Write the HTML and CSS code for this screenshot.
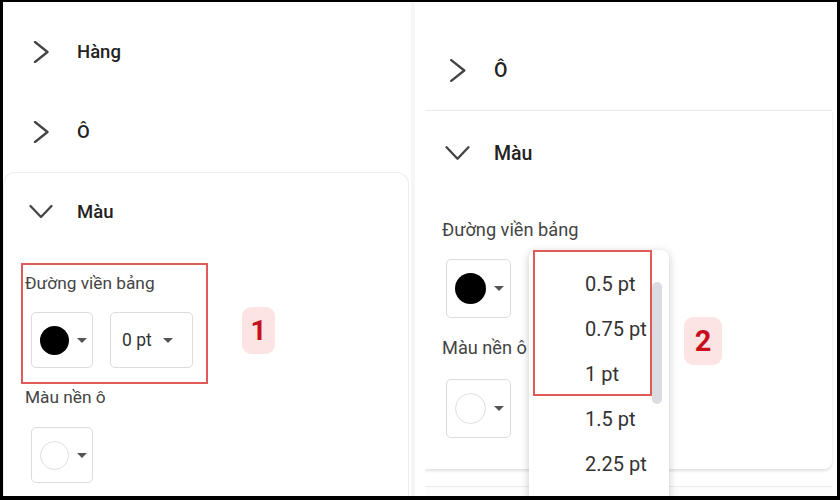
FILE: index.html
```
<!DOCTYPE html>
<html>
<head>
<meta charset="utf-8">
<link rel="stylesheet" href="styles.css">
</head>
<body>
<div class="frame">
  <div class="left">
    <div class="row">
      <span class="ico"><svg width="24" height="22" viewBox="0 0 24 22"><polyline points="6,1 18.5,11 6,21" /></svg></span>
      <span class="title">Hàng</span>
    </div>
    <div class="row">
      <span class="ico"><svg width="24" height="22" viewBox="0 0 24 22"><polyline points="6,1 18.5,11 6,21" /></svg></span>
      <span class="title">Ô</span>
    </div>
    <div class="card">
      <div class="row row-open">
        <span class="ico"><svg width="24" height="22" viewBox="0 0 24 22"><polyline points="1.5,5 12,16 22.5,5" /></svg></span>
        <span class="title">Màu</span>
      </div>
      <div class="label l1">Đường viền bảng</div>
      <div class="btns">
        <div class="cbtn"><span class="dot black"></span><span class="caret"></span></div>
        <div class="sbtn"><span class="stxt">0 pt</span><span class="caret"></span></div>
      </div>
      <div class="label l2">Màu nền ô</div>
      <div class="btns b2">
        <div class="cbtn"><span class="dot white"></span><span class="caret"></span></div>
      </div>
    </div>
    <div class="mark mark1"></div>
    <div class="badge badge1">1</div>
  </div>
  <div class="sep"></div>
  <div class="gap"></div>
  <div class="right">
    <div class="row">
      <span class="ico"><svg width="25" height="23" viewBox="0 0 24 22"><polyline points="6,1 18.5,11 6,21" /></svg></span>
      <span class="title">Ô</span>
    </div>
    <div class="card">
      <div class="row row-open">
        <span class="ico"><svg width="25" height="23" viewBox="0 0 24 22"><polyline points="1.5,5 12,16 22.5,5" /></svg></span>
        <span class="title">Màu</span>
      </div>
      <div class="label l1">Đường viền bảng</div>
      <div class="btns">
        <div class="cbtn"><span class="dot black"></span><span class="caret"></span></div>
      </div>
      <div class="label l2">Màu nền ô</div>
      <div class="btns b2">
        <div class="cbtn"><span class="dot white"></span><span class="caret"></span></div>
      </div>
    </div>
    <div class="below"><div class="next"></div></div>
    <div class="menu">
      <div class="item">0.5 pt</div>
      <div class="item">0.75 pt</div>
      <div class="item">1 pt</div>
      <div class="item">1.5 pt</div>
      <div class="item">2.25 pt</div>
      <div class="thumb"></div>
    </div>
    <div class="mark mark2"></div>
    <div class="badge badge2">2</div>
  </div>
</div>
</body>
</html>
```

FILE: styles.css
```
* { box-sizing: border-box; }
html, body { margin: 0; padding: 0; background: #000; }
body { font-family: Roboto, "Noto Sans", sans-serif; }

.frame {
  width: 840px;
  height: 500px;
  background: #000;
  padding: 2px 3px 4px 3px;
  display: flex;
}

.left {
  position: relative;
  width: 408px;
  background: #fff;
  padding-top: 10px;
  overflow: hidden;
}
.sep { width: 4px; background: #f6f6fa; }
.gap { width: 10px; background: #fff; }
.right {
  position: relative;
  flex: 1;
  background: #fff;
  padding-top: 28px;
  overflow: hidden;
  display: flex;
  flex-direction: column;
}
.right > .row, .right > .card { flex-shrink: 0; }

.row {
  height: 80px;
  display: flex;
  align-items: center;
  padding-left: 26px;
}
.ico { display: flex; margin-right: 24px; }
.ico svg polyline {
  fill: none;
  stroke: #454545;
  stroke-width: 2.3;
  stroke-linecap: round;
  stroke-linejoin: round;
}
.title {
  font-size: 18.5px;
  font-weight: 500;
  color: #222;
}

.left .card {
  border: 1px solid #ededed;
  border-bottom: none;
  border-radius: 12px 12px 0 0;
  margin-right: 2px;
  padding-left: 21px;
}
.left .card .row { height: 78px; padding-left: 25px; margin-left: -21px; }

.label {
  font-size: 17.3px;
  line-height: 20px;
  color: #444;
}
.left .l1 { margin-top: 22px; }
.left .l2 { margin-top: 19px; }
.btns {
  display: flex;
  gap: 17px;
  margin-top: 19px;
  margin-left: 6px;
}
.left .b2 { margin-top: 20px; padding-bottom: 20px; }

.cbtn, .sbtn {
  height: 56px;
  border: 1px solid #dcdcdc;
  border-radius: 5px;
  display: flex;
  align-items: center;
  background: #fff;
}
.cbtn { width: 62px; padding-left: 8px; }
.sbtn { width: 83px; padding-left: 11px; }
.stxt { font-size: 17.5px; color: #333; margin-right: 11px; }
.dot {
  width: 29px;
  height: 29px;
  border-radius: 50%;
  margin-right: 8px;
}
.dot.black { background: #000; }
.dot.white { background: #fff; border: 1px solid #dedede; }
.caret {
  width: 0;
  height: 0;
  border-left: 5px solid transparent;
  border-right: 5px solid transparent;
  border-top: 5px solid #555;
}

/* right panel, slightly larger scale */
.right .row { padding-left: 20px; }
.right .title { font-size: 19.5px; }
.right .card {
  border-top: 1px solid #e9e9e9;
  margin-right: 5px;
  padding-left: 17px;
  padding-bottom: 31px;
  border-radius: 0 0 8px 0;
  box-shadow: 0 2px 3px rgba(0,0,0,0.12);
  position: relative;
  background: #fff;
}
.right .card .row { height: 85px; padding-left: 20px; margin-left: -17px; }
.right .label { font-size: 18.2px; line-height: 21px; }
.right .l1 { margin-top: 23px; }
.right .l2 { margin-top: 19px; }
.right .btns { margin-left: 4px; }
.right .b2 { margin-top: 21px; }
.right .cbtn { width: 65px; height: 59px; padding-left: 8px; }
.right .dot { width: 31px; height: 31px; margin-right: 8px; }
.below { flex: 1; background: #fff; padding-top: 17px; }
.next { height: 12px; border-top: 1px solid #ececec; margin-right: 5px; background: #fdfdfd; }

.menu {
  position: absolute;
  left: 104px;
  top: 248px;
  width: 140px;
  height: 270px;
  background: #fff;
  border-radius: 8px;
  box-shadow: 0 2px 8px rgba(0,0,0,0.22);
  padding-top: 12px;
}
.item {
  height: 45px;
  line-height: 45px;
  padding-left: 56px;
  font-size: 20px;
  color: #333;
}
.thumb {
  position: absolute;
  left: 123px;
  top: 32px;
  width: 10px;
  height: 122px;
  border-radius: 5px;
  background: #dadce0;
}

.mark {
  position: absolute;
  border: 2px solid #e05a5a;
}
.mark1 { left: 18px; top: 261px; width: 187px; height: 121px; }
.mark2 { left: 108px; top: 248px; width: 119px; height: 146px; }

.badge {
  position: absolute;
  background: #fde4e4;
  color: #c80f1e;
  font-weight: 700;
  border-radius: 9px;
  display: flex;
  align-items: center;
  justify-content: center;
}
.badge1 { left: 239px; top: 305px; width: 33px; height: 47px; font-size: 28px; }
.badge2 { left: 259px; top: 315px; width: 38px; height: 48px; font-size: 29px; }
```
